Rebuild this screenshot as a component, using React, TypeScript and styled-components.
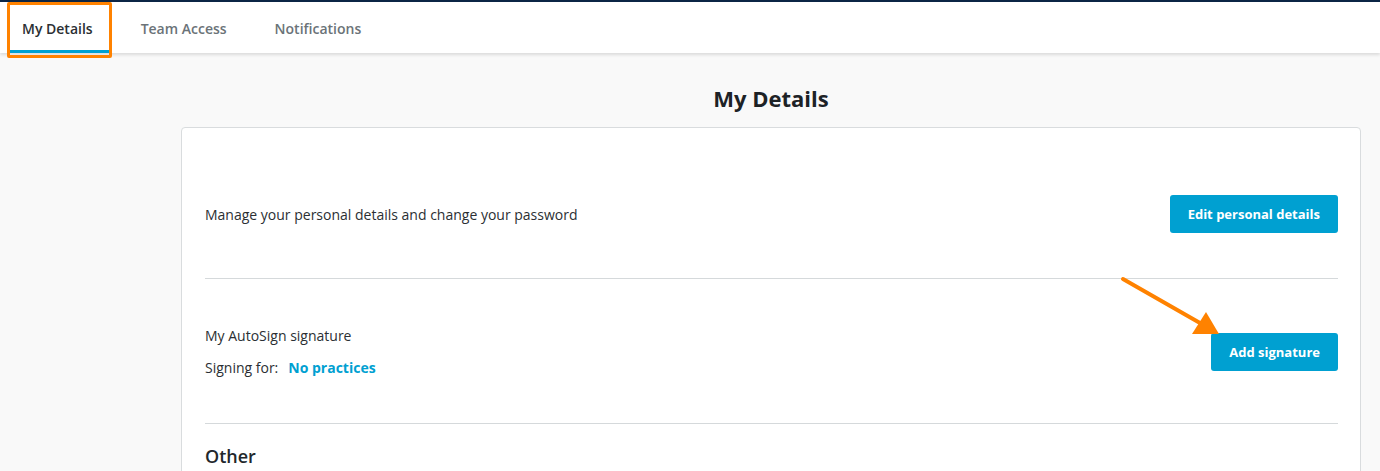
import React, { FC } from 'react';
import styled, { createGlobalStyle } from 'styled-components';

const GlobalStyle = createGlobalStyle`
    html, body {
        margin: 0;
        padding: 0;
        background: #f9f9f9;
        font-family: 'Open Sans', 'Liberation Sans', Arial, sans-serif;
        color: #2b2f33;
        overflow: hidden;
    }
`;

const Page = styled.div`
    width: 1380px;
    height: 471px;
    border-top: 2px solid #0b2545;
    box-sizing: border-box;
    position: relative;
    overflow: hidden;
`;

const TabBar = styled.nav`
    display: flex;
    align-items: stretch;
    height: 51px;
    background: #fff;
    padding-left: 10px;
    box-shadow: 0 2px 3px rgba(0, 0, 0, 0.12);
    position: relative;
    z-index: 1;
`;

const Tab = styled.div<{ active?: boolean }>`
    position: relative;
    display: flex;
    align-items: center;
    box-sizing: border-box;
    padding: 4px 16px 0 12px;
    margin-right: 20px;
    font-size: 14px;
    font-weight: 600;
    color: ${({ active }) => (active ? '#2b2f33' : '#6b7378')};
    border-bottom: 3px solid ${({ active }) => (active ? '#00a0d1' : 'transparent')};
`;

const Highlight = styled.span`
    position: absolute;
    left: -3px;
    right: -3px;
    top: 0;
    bottom: -8px;
    border: 3px solid #ff8200;
    border-radius: 2px;
    pointer-events: none;
`;

const Main = styled.main`
    padding: 30px 19px 0 181px;
`;

const Title = styled.h1`
    margin: 0 0 14px;
    text-align: center;
    font-size: 22px;
    font-weight: 700;
    color: #1d2226;
`;

const Card = styled.section`
    background: #fff;
    border: 1px solid #d9dcde;
    border-radius: 4px;
    padding: 0 22px 60px 23px;
`;

const Row = styled.div<{ top: number; bottom: number }>`
    display: flex;
    align-items: center;
    justify-content: space-between;
    padding: ${({ top, bottom }) => `${top}px 0 ${bottom}px`};
    border-bottom: 1px solid #d5d9db;
`;

const Text = styled.p`
    margin: 0;
    font-size: 14px;
    line-height: 19px;
    color: #2b2f33;
`;

const Stack = styled.div`
    display: flex;
    flex-direction: column;
    gap: 13px;
`;

const Label = styled.span`
    margin-right: 10px;
`;

const LinkText = styled.a`
    color: #00a0d1;
    font-weight: 700;
    font-size: 14px;
    text-decoration: none;
`;

const Button = styled.button`
    height: 38px;
    padding: 0 18px;
    border: none;
    border-radius: 3px;
    background: #00a0d1;
    color: #fff;
    font-family: inherit;
    font-size: 13px;
    font-weight: 700;
    cursor: pointer;
`;

const SubHeading = styled.h2`
    margin: 0;
    padding: 20px 0 0;
    font-size: 18px;
    line-height: 25px;
    font-weight: 600;
    color: #22272b;
`;

const Arrow = styled.svg`
    position: absolute;
    left: 1116px;
    top: 270px;
    pointer-events: none;
`;

const App: FC = () => {
    return (
        <Page>
            <GlobalStyle />
            <TabBar>
                <Tab active>
                    My Details
                    <Highlight />
                </Tab>
                <Tab>Team Access</Tab>
                <Tab>Notifications</Tab>
            </TabBar>
            <Main>
                <Title>My Details</Title>
                <Card>
                    <Row top={67} bottom={45}>
                        <Text>Manage your personal details and change your password</Text>
                        <Button>Edit personal details</Button>
                    </Row>
                    <Row top={47} bottom={46}>
                        <Stack>
                            <Text>My AutoSign signature</Text>
                            <Text>
                                <Label>Signing for:</Label>
                                <LinkText href="#">No practices</LinkText>
                            </Text>
                        </Stack>
                        <Button>Add signature</Button>
                    </Row>
                    <SubHeading>Other</SubHeading>
                </Card>
            </Main>
            <Arrow width="110" height="70" viewBox="0 0 110 70">
                <line x1="7" y1="7" x2="84" y2="51" stroke="#ff8200" strokeWidth="4" strokeLinecap="round" />
                <polygon points="103,62 76,62 90,40" fill="#ff8200" />
            </Arrow>
        </Page>
    );
};

export default App;
